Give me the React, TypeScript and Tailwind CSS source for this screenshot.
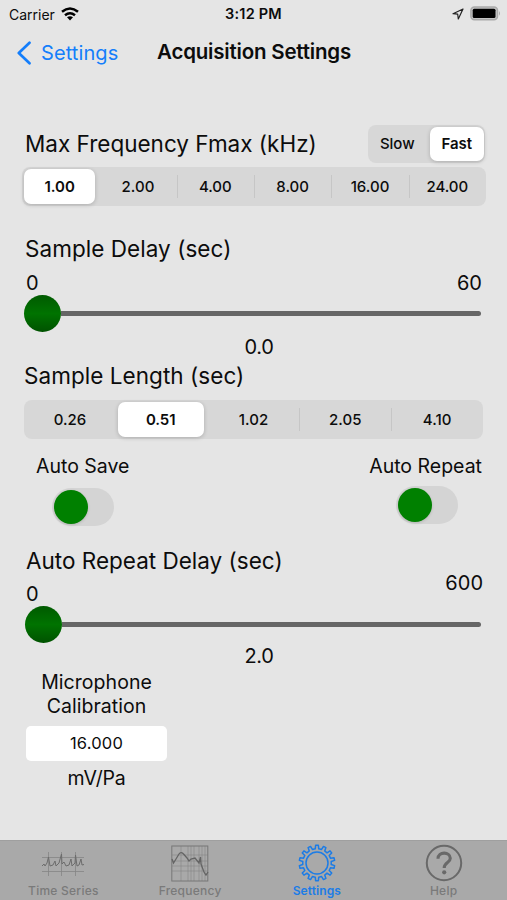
import React from "react"
import clsx from "clsx"

const fmaxValues = ["1.00", "2.00", "4.00", "8.00", "16.00", "24.00"]
const lengthValues = ["0.26", "0.51", "1.02", "2.05", "4.10"]

type SegmentedProps = {
  items: string[]
  selected: number
  className?: string
}

const Segmented = ({ items, selected, className }: SegmentedProps) => {
  return (
    <div className={clsx("flex rounded-[8px] bg-[#d7d7d7] py-[2px]", className)}>
      {items.map((item, index) => {
        const active = index === selected
        const last = index === items.length - 1
        const divider = index > 0 && !active && index - 1 !== selected
        return (
          <div key={item} className="flex flex-1 items-center">
            <div className={clsx("h-[23px] w-px", divider && "bg-[#c6c6c6]")} />
            <div
              className={clsx(
                "flex h-full flex-1 items-center justify-center pt-px text-[15px]",
                active
                  ? "rounded-[7px] bg-white font-semibold tracking-[-0.1px] shadow-[0_1px_4px_rgba(0,0,0,0.2)]"
                  : "pr-px font-medium",
                active && (last ? "mr-px ml-[2px]" : "mr-[4px] ml-px")
              )}
            >
              {item}
            </div>
          </div>
        )
      })}
    </div>
  )
}

const Slider = ({ className }: { className?: string }) => {
  return (
    <div className={clsx("flex h-[37px] items-center", className)}>
      <div className="h-[37px] w-[37px] rounded-full bg-linear-to-b from-[#005a00] via-[#007300] to-[#005200]" />
      <div className="h-[5px] flex-1 rounded-r-full bg-[#666666]" />
    </div>
  )
}

const Toggle = ({ className }: { className?: string }) => {
  return (
    <div className={clsx("flex h-[38px] w-[62px] items-center rounded-full bg-[#d4d4d4] pl-[2px]", className)}>
      <div className="h-[34px] w-[34px] rounded-full bg-[#008000] shadow-[0_1px_3px_rgba(0,0,0,0.15)]" />
    </div>
  )
}

const TimeSeriesIcon = () => (
  <svg width="44" height="37" viewBox="0 0 44 37" fill="none" stroke="#858585">
    <path d="M1 12.500H43M1 26.500H43M7.500 7V31M20.500 7V31M34.500 7V31" strokeWidth="0.8" />
    <path
      d="M1 21L3 19L4 21L6 18L7.500 12L9 21L12 20L14 16L15 21L18 18L20.500 9L21 19L23 17L25 21L28 20L30 14L31 21L34 18L34.500 10L36 21L38 20L40 14L41 20L43 19.500"
      strokeWidth="1"
      stroke="#6c6c6c"
    />
  </svg>
)

const FrequencyIcon = () => (
  <svg width="38" height="37" viewBox="0 0 38 37" fill="none" stroke="#777777">
    <rect x="0.8" y="1" width="36" height="35" strokeWidth="1" />
    <path
      d="M1 10H37M1 16H37M1 21H37M1 26H37M10 1V36M17 1V36M20 1V36M23 1V36M28 1V36M31 1V36M34 1V36"
      strokeWidth="0.4"
    />
    <path
      d="M1 14L2.500 18L5 14L8 9Q10 6 13 9.500L16 13L18 16L20 14L24 13L28 18L29.500 12L30 19L33 27L35 30L37 27"
      strokeWidth="1.300"
      stroke="#646464"
    />
  </svg>
)

const TEETH = 14

const gearPoints = () => {
  const points: string[] = []
  for (let i = 0; i < TEETH; i++) {
    const offsets = [
      [-0.27, 14.3],
      [-0.17, 17.8],
      [0.17, 17.8],
      [0.27, 14.3],
    ]
    offsets.forEach(([shift, radius]) => {
      const angle = ((i + shift) / TEETH) * Math.PI * 2 - Math.PI / 2
      points.push(`${(19 + Math.cos(angle) * radius).toFixed(2)},${(19 + Math.sin(angle) * radius).toFixed(2)}`)
    })
  }
  return points.join(" ")
}

const GearIcon = () => (
  <svg width="38" height="38" viewBox="0 0 38 38" fill="none" stroke="#1c7ce6" strokeWidth="1.500" strokeLinejoin="round">
    <polygon points={gearPoints()} />
    <circle cx="19" cy="19" r="11" />
  </svg>
)

const HelpIcon = () => (
  <svg width="38" height="38" viewBox="0 0 38 38" fill="none" stroke="#696969">
    <circle cx="19" cy="19" r="17.200" strokeWidth="2" />
    <path d="M13 14.800C13 7.300 25.300 7.300 25.300 14.300C25.300 18.800 19.200 18.500 19.200 24" strokeWidth="3.100" />
    <circle cx="19.200" cy="28.300" r="2.100" fill="#696969" stroke="none" />
  </svg>
)

const tabs = [
  { label: "Time Series", icon: <TimeSeriesIcon /> },
  { label: "Frequency", icon: <FrequencyIcon /> },
  { label: "Settings", icon: <GearIcon />, active: true },
  { label: "Help", icon: <HelpIcon /> },
]

const StatusBar = () => (
  <div className="grid h-7 grid-cols-3 items-center text-[14px]">
    <div className="flex items-center gap-[6px] pl-[9px]">
      Carrier
      <svg width="18" height="14" viewBox="0 0 18 14" className="-mt-px" fill="none" stroke="black" strokeWidth="2.500">
        <path d="M1 4.800Q9 -1.800 17 4.800M4 8.300Q9 4.200 14 8.300" />
        <path d="M9 13.500L6 10.300Q9 8 12 10.300Z" fill="black" stroke="none" />
      </svg>
    </div>
    <div className="text-center text-[14.500px] font-semibold tracking-[0.2px]">3:12 PM</div>
    <div className="flex items-center justify-end gap-[6px] pr-[6px]">
      <svg width="12" height="12" viewBox="0 0 12 12" fill="none" stroke="#222" strokeWidth="1.200" strokeLinejoin="round">
        <path d="M11 1L1 5.700L5.700 6.200L6.300 11Z" />
      </svg>
      <svg width="31" height="15" viewBox="0 0 31 15" className="-mt-[2px]">
        <rect x="0.900" y="0.900" width="26.600" height="12.900" rx="3.500" fill="#c4c4c4" stroke="#a9a9a9" strokeWidth="1.500" />
        <rect x="2.700" y="2.700" width="22.800" height="9.200" rx="1.500" fill="black" />
        <path d="M29 5Q31 7.400 29 9.800Z" fill="#a9a9a9" />
      </svg>
    </div>
  </div>
)

export default function App() {
  return (
    <div className="flex h-[900px] w-[507px] flex-col overflow-hidden bg-[#e5e5e5] font-['Inter',sans-serif] whitespace-nowrap text-[#0c0c0c]">
      <StatusBar />
      <div className="flex h-[49px] items-center pl-[17px]">
        <svg width="15" height="24" viewBox="0 0 15 24" fill="none" stroke="#147efb" strokeWidth="2.700" strokeLinecap="round" strokeLinejoin="round">
          <path d="M12.500 1.800L1.800 12L12.500 22.200" />
        </svg>
        <div className="ml-[9px] w-[116px] text-[20px] tracking-[0.1px] text-[#147efb]">Settings</div>
        <div className="text-[20.500px] font-semibold tracking-[-0.2px]">Acquisition Settings</div>
      </div>

      <div className="mt-[47px] flex h-[39px] items-center justify-between pr-[22px] pl-[25px]">
        <div className="text-[22.500px]">Max Frequency Fmax (kHz)</div>
        <Segmented items={["Slow", "Fast"]} selected={1} className="h-[38px] w-[117px]" />
      </div>
      <Segmented items={fmaxValues} selected={0} className="mt-1 mr-[21px] ml-[22px] h-[39px]" />

      <div className="mt-[27px] ml-[25px] h-8 text-[22.500px] leading-8 tracking-[0.05px]">Sample Delay (sec)</div>
      <div className="mr-[25px] ml-[26px] flex h-[30px] items-center justify-between pt-[5px] text-[20px]">
        <span>0</span>
        <span>60</span>
      </div>
      <Slider className="mr-[26px] ml-[24px]" />
      <div className="ml-[11px] h-[30px] text-center text-[20px] leading-[31px] tracking-[-0.3px]">0.0</div>

      <div className="ml-[24px] h-[38px] text-[22.500px] leading-[28px] tracking-[0.05px]">Sample Length (sec)</div>
      <Segmented items={lengthValues} selected={1} className="mr-[24px] ml-[24px] h-[39px]" />

      <div className="mt-3 flex justify-between pr-[25px] pl-[36px]">
        <div>
          <div className="h-[30px] text-[19.500px] leading-[31px]">Auto Save</div>
          <Toggle className="mt-[7px] ml-[16px]" />
        </div>
        <div>
          <div className="h-[30px] text-[19.500px] leading-[31px]">Auto Repeat</div>
          <Toggle className="mt-[5px] ml-[27px]" />
        </div>
      </div>

      <div className="mt-[19px] ml-[26px] h-8 text-[22.500px] leading-8">Auto Repeat Delay (sec)</div>
      <div className="mr-[24px] ml-[26px] flex h-[29px] justify-between text-[20px] leading-7">
        <span className="pt-[3px]">0</span>
        <span className="-mt-[8px]">600</span>
      </div>
      <Slider className="mr-[26px] ml-[25px]" />
      <div className="ml-[11px] h-[26px] text-center text-[20px] leading-[27px] tracking-[-0.3px]">2.0</div>

      <div className="ml-[26px] flex w-[141px] flex-col items-center pt-px">
        <div className="text-center text-[19.500px] leading-6 tracking-[0.05px]">
          Microphone
          <br />
          Calibration
        </div>
        <div className="mt-2 flex h-[35px] w-full items-center justify-center rounded-[5px] bg-white text-[16.500px] tracking-[0.2px]">
          16.000
        </div>
        <div className="mt-[3px] text-[19.500px] leading-[28px] tracking-[-0.2px]">mV/Pa</div>
      </div>

      <div className="mt-auto flex h-[60px] border-t border-[#9f9f9f] bg-[#a9a9a9]">
        {tabs.map((tab) => (
          <div
            key={tab.label}
            className={clsx(
              "flex flex-1 flex-col items-center pt-[3px] text-[12px]",
              tab.active ? "font-semibold tracking-[0.1px] text-[#1c7ce6]" : "font-medium tracking-[0.25px] text-[#7a7a7a]"
            )}
          >
            <div className="flex h-[38px] items-center">{tab.icon}</div>
            <div className="leading-[18px]">{tab.label}</div>
          </div>
        ))}
      </div>
    </div>
  )
}
